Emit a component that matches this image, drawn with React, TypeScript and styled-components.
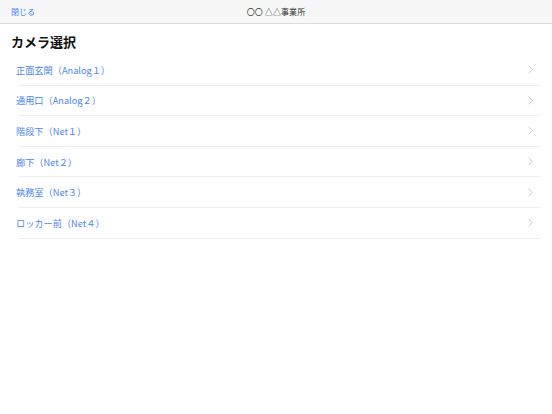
import React from "react";
import styled, { createGlobalStyle } from "styled-components";

const GlobalStyle = createGlobalStyle`
  html, body {
    margin: 0;
    padding: 0;
    background: #ffffff;
    font-family: "Noto Sans CJK JP", "Noto Sans", sans-serif;
  }
`;

const Page = styled.div`
  width: 552px;
  height: 414px;
  background: #ffffff;
  display: flex;
  flex-direction: column;
`;

const NavBar = styled.div`
  height: 23px;
  background: #f7f7f7;
  border-bottom: 1px solid #dcdcdc;
  display: grid;
  grid-template-columns: 1fr auto 1fr;
  align-items: center;
  padding: 0 11px;
`;

const CloseLink = styled.span`
  font-size: 8px;
  color: #3b82f6;
  justify-self: start;
`;

const NavTitle = styled.span`
  font-size: 8px;
  color: #333;
  letter-spacing: 0.1px;
`;

const Heading = styled.h1`
  margin: 0;
  padding: 9px 11px 4px;
  font-size: 13px;
  font-weight: 700;
  color: #111;
  line-height: 18px;
`;

const List = styled.ul`
  list-style: none;
  margin: 0;
  padding: 0;
`;

const Row = styled.li`
  height: 30.6px;
  box-sizing: border-box;
  margin-left: 19px;
  margin-right: 12px;
  border-bottom: 1px solid #ececec;
  display: flex;
  align-items: center;
  justify-content: space-between;
`;

const Label = styled.span`
  margin-left: -3px;
  font-size: 9.2px;
  color: #4a86f0;
`;

const Chevron = styled.svg`
  width: 5px;
  height: 9px;
  margin-right: 7px;
`;

const cameras = [
  "正面玄関（Analog１）",
  "通用口（Analog２）",
  "階段下（Net１）",
  "廊下（Net２）",
  "執務室（Net３）",
  "ロッカー前（Net４）",
];

export default function App() {
  return (
    <Page>
      <GlobalStyle />
      <NavBar>
        <CloseLink>閉じる</CloseLink>
        <NavTitle>〇〇 △△事業所</NavTitle>
        <span />
      </NavBar>
      <Heading>カメラ選択</Heading>
      <List>
        {cameras.map((c) => (
          <Row key={c}>
            <Label>{c}</Label>
            <Chevron viewBox="0 0 5 9">
              <path d="M0.7 0.7 L4.2 4.5 L0.7 8.3" fill="none" stroke="#c7c7cc" strokeWidth="1" />
            </Chevron>
          </Row>
        ))}
      </List>
    </Page>
  );
}
